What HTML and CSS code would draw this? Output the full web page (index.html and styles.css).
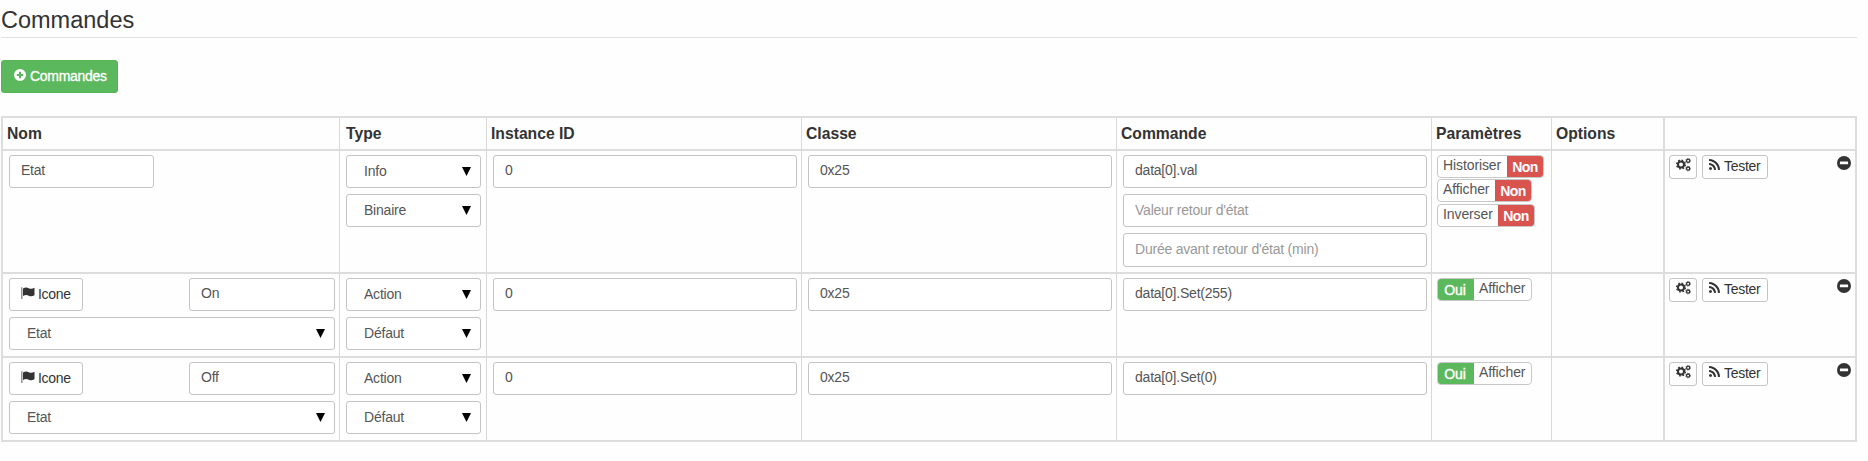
FILE: index.html
```html
<!DOCTYPE html>
<html lang="fr">
<head>
<meta charset="utf-8">
<title>Commandes</title>
<link rel="stylesheet" href="styles.css">
</head>
<body>
<svg class="defs" width="0" height="0">
  <symbol id="plus" viewBox="0 0 12 12"><path fill-rule="evenodd" d="M6 0a6 6 0 1 0 0 12A6 6 0 0 0 6 0zM5 2.8h2V5h2.2v2H7v2.200H5V7H2.800V5H5z"/></symbol>
  <symbol id="minus" viewBox="0 0 14 14"><path fill-rule="evenodd" d="M7 0a7 7 0 1 0 0 14A7 7 0 0 0 7 0zM3.300 5.500h7.400q.4 0 .4.4v2q0 .4-.4.4H3.300q-.4 0-.4-.4v-2q0-.4.4-.4z"/></symbol>
  <symbol id="flag" viewBox="0 0 14 12"><path opacity=".65" d="M.2.200h1.200V12H.2z"/><path d="M2 1.600C4.500.1 6 .5 7.800 1.300s3.400.7 5.700-.5v7.400c-2.300 1.200-3.900 1.300-5.700.5S4.500 7.500 2 9z"/></symbol>
  <symbol id="rss" viewBox="0 128 1408 1408"><path d="M384 1344q0 80-56 136t-136 56-136-56-56-136 56-136 136-56 136 56 56 136zm512 123q2 28-17 48-18 21-47 21h-135q-25 0-43-16.500t-20-41.500q-22-229-184.500-391.500t-391.500-184.500q-25-2-41.500-20t-16.500-43v-135q0-29 21-47 17-17 43-17h5q160 13 306 80.500t259 181.500q114 113 181.500 259t80.500 306zm512 2q2 27-18 47-18 20-46 20h-143q-26 0-44.500-17.500t-19.500-42.500q-12-215-101-408.500t-231.500-336-336-231.500-408.500-102q-25-1-42.500-19.500t-17.500-43.500v-143q0-28 20-46 18-18 44-18h3q262 13 501.500 120t425.500 294q187 186 294 425.500t120 501.500z"/></symbol>
  <symbol id="cogs" viewBox="0 0 15 14"><g fill="none" stroke="currentColor"><circle cx="5" cy="6.500" r="3" stroke-width="2"/><circle cx="5" cy="6.500" r="4.400" stroke-width="1.400" stroke-dasharray="1.728 1.728"/><circle cx="12.100" cy="2.800" r="1.600" stroke-width="1.300"/><circle cx="12.100" cy="2.800" r="2.400" stroke-width=".7" stroke-dasharray=".94 .94"/><circle cx="12.100" cy="10.600" r="1.600" stroke-width="1.300"/><circle cx="12.100" cy="10.600" r="2.400" stroke-width=".7" stroke-dasharray=".94 .94"/></g></symbol>
</svg>

<h1 class="title">Commandes</h1>
<button class="add"><svg class="i-plus"><use href="#plus"/></svg>Commandes</button>

<div class="table">
  <div class="row head">
    <div class="cell">Nom</div><div class="cell type">Type</div><div class="cell">Instance ID</div><div class="cell">Classe</div><div class="cell">Commande</div><div class="cell">Paramètres</div><div class="cell">Options</div><div class="cell"></div>
  </div>

  <div class="row tall">
    <div class="cell"><div class="field short">Etat</div></div>
    <div class="cell"><div class="field select">Info</div><div class="field select">Binaire</div></div>
    <div class="cell"><div class="field">0</div></div>
    <div class="cell"><div class="field">0x25</div></div>
    <div class="cell"><div class="field">data[0].val</div><div class="field hint">Valeur retour d'état</div><div class="field hint last">Durée avant retour d'état (min)</div></div>
    <div class="cell params">
      <div class="toggle w1"><span class="label">Historiser</span><span class="no">Non</span></div>
      <div class="toggle w2"><span class="label">Afficher</span><span class="no">Non</span></div>
      <div class="toggle w3"><span class="label">Inverser</span><span class="no">Non</span></div>
    </div>
    <div class="cell"></div>
    <div class="cell actions"><button class="mini gear"><svg class="i-cogs"><use href="#cogs"/></svg></button><button class="mini test"><svg class="i-rss"><use href="#rss"/></svg>Tester</button><svg class="i-minus"><use href="#minus"/></svg></div>
  </div>

  <div class="row">
    <div class="cell"><div class="line"><button class="icone"><svg class="i-flag"><use href="#flag"/></svg>Icone</button><div class="field named">On</div></div><div class="field select">Etat</div></div>
    <div class="cell"><div class="field select">Action</div><div class="field select">Défaut</div></div>
    <div class="cell"><div class="field">0</div></div>
    <div class="cell"><div class="field">0x25</div></div>
    <div class="cell"><div class="field">data[0].Set(255)</div></div>
    <div class="cell params"><div class="toggle on"><span class="yes">Oui</span><span class="label">Afficher</span></div></div>
    <div class="cell"></div>
    <div class="cell actions"><button class="mini gear"><svg class="i-cogs"><use href="#cogs"/></svg></button><button class="mini test"><svg class="i-rss"><use href="#rss"/></svg>Tester</button><svg class="i-minus"><use href="#minus"/></svg></div>
  </div>

  <div class="row">
    <div class="cell"><div class="line"><button class="icone"><svg class="i-flag"><use href="#flag"/></svg>Icone</button><div class="field named">Off</div></div><div class="field select">Etat</div></div>
    <div class="cell"><div class="field select">Action</div><div class="field select">Défaut</div></div>
    <div class="cell"><div class="field">0</div></div>
    <div class="cell"><div class="field">0x25</div></div>
    <div class="cell"><div class="field">data[0].Set(0)</div></div>
    <div class="cell params"><div class="toggle on"><span class="yes">Oui</span><span class="label">Afficher</span></div></div>
    <div class="cell"></div>
    <div class="cell actions"><button class="mini gear"><svg class="i-cogs"><use href="#cogs"/></svg></button><button class="mini test"><svg class="i-rss"><use href="#rss"/></svg>Tester</button><svg class="i-minus"><use href="#minus"/></svg></div>
  </div>
</div>
</body>
</html>
```
FILE: styles.css
```css
* { box-sizing: border-box; }
body { margin: 0; padding: 0 11px 0 1px; background: #fefefe; color: #333; font: 14px/18px "Liberation Sans", Arial, sans-serif; letter-spacing: -.22px; }
svg { display: block; flex: none; fill: currentColor; }
.defs { position: absolute; }
button { display: flex; margin: 0; font: inherit; letter-spacing: -.3px; color: #333; background: #fff; border: 1px solid #c4c4c4; border-radius: 3px; }

.title { height: 38px; margin: 0 0 22px; padding: 6px 0 0; border-bottom: 1px solid #e2e2e2; font-size: 23.5px; line-height: 28px; font-weight: 400; letter-spacing: 0; }
.add { width: 117px; height: 33px; padding: 6px 0 0 12px; gap: 4px; background: #5cb85c; border: 1px solid #56b456; color: #fff; -webkit-text-stroke: .3px #fff; }
.i-plus { width: 12px; height: 12px; margin-top: 2px; }

.table { margin-top: 23px; border: 2px solid #ddd; border-width: 2px 0 0 2px; }
.row { display: grid; grid-template-columns: 337px 147px 315px 315px 315px 120px 113px 192px; height: 84px; }
.head { height: 33px; font-size: 15.700px; font-weight: 700; letter-spacing: 0; }
.tall { height: 123px; }
.cell { display: flex; flex-direction: column; gap: 6px; padding: 4px 4px 0 6px; border: 0 solid #d8d8d8; border-width: 0 1px 2px 0; border-bottom-color: #ddd; }
.cell:nth-child(n+7) { border-right-width: 2px; border-right-color: #ddd; }
.cell:nth-child(2) { padding-right: 5px; }
.head .cell { padding: 6px 0 0 4px; line-height: 20px; }
.head .type { padding-left: 6px; }

.field { flex: none; height: 33px; padding: 5px 11px; border: 1px solid #c4c4c4; border-radius: 3px; background: #fff; color: #555; white-space: nowrap; }
.hint { padding-top: 6px; color: #999; }
.last { height: 34px; }
.short { width: 145px; }
.named { width: 146px; }
.line { display: flex; justify-content: space-between; }
.select { display: flex; justify-content: space-between; padding: 6px 9px 0 17px; }
.select::after { content: ""; margin-top: 5px; width: 9px; height: 9px; background: #000; clip-path: polygon(0 0, 100% 0, 50% 100%); }
.icone { width: 74px; height: 33px; padding: 6px 0 0 11px; gap: 3px; }
.i-flag { width: 14px; height: 12px; margin-top: 2px; }

.params { gap: 1.300px; padding-left: 5px; padding-top: 4px; }
.toggle { flex: none; display: flex; height: 23px; border: 1px solid #c8c8c8; border-radius: 4px; overflow: hidden; background: #fff; color: #555; line-height: 17px; letter-spacing: -.1px; }
.toggle .label { flex: 1; padding: 1px 0 0 5px; }
.w1 { width: 107px; }
.w2 { width: 95px; }
.w3 { width: 98px; }
.on { width: 95px; }
.no, .yes { width: 37px; margin: -1px; padding: 4px 1px 0 0; text-align: center; color: #fff; }
.no { background: #d9534f; font-weight: 700; font-size: 14px; letter-spacing: -.6px; }
.yes { width: 37px; margin-right: 0; background: #5cb85c; -webkit-text-stroke: .4px #fff; }

.actions { flex-direction: row; gap: 5px; padding: 4px 4px 0 4px; }
.mini { height: 24px; padding: 1px 0 0 6px; gap: 4px; }
.gear { width: 28px; }
.test { width: 66px; }
.i-cogs { width: 15px; height: 14px; margin-top: 1px; }
.i-rss { width: 11px; height: 11px; margin-top: 2px; }
.i-minus { width: 14px; height: 14px; margin: 1px 0 0 auto; }
```
